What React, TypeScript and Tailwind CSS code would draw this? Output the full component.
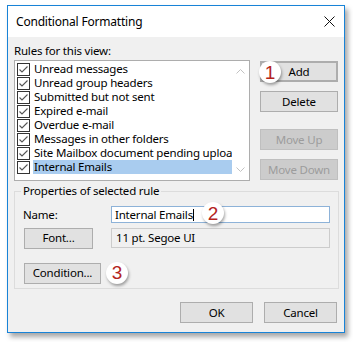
import React from "react";

const RULES = [
  "Unread messages",
  "Unread group headers",
  "Submitted but not sent",
  "Expired e-mail",
  "Overdue e-mail",
  "Messages in other folders",
  "Site Mailbox document pending upload",
  "Internal Emails",
];

function CheckBox() {
  return (
    <svg width="13" height="13" viewBox="0 0 13 13" className="shrink-0">
      <rect x="0.5" y="0.5" width="12" height="12" fill="#fff" stroke="#333" />
      <path d="M2.5 6.5 L5 9 L10.5 3.5" fill="none" stroke="#555" strokeWidth="1.1" />
    </svg>
  );
}

function Badge({ n, className }: { n: string; className: string }) {
  return (
    <span
      className={
        "absolute flex h-[22px] w-[22px] items-center justify-center rounded-full bg-white font-['Liberation_Sans',Arial,sans-serif] text-[19px] leading-none tracking-normal text-[#b4231d] shadow-[1px_2px_3px_rgba(0,0,0,0.35)] " +
        className
      }
    >
      {n}
    </span>
  );
}

function Btn({
  children,
  className = "",
  disabled = false,
}: {
  children: React.ReactNode;
  className?: string;
  disabled?: boolean;
}) {
  return (
    <button
      type="button"
      className={
        "relative flex h-[21px] items-center justify-center border " +
        (disabled
          ? "border-[#bfbfbf] bg-[#cccccc] text-[#9c9c9c] "
          : "border-[#adadad] bg-[#e1e1e1] text-black ") +
        className
      }
    >
      {children}
    </button>
  );
}

export default function App() {
  return (
    <div className="min-h-screen bg-white pl-[7px] pt-[5px] font-['Noto_Sans','Segoe_UI',sans-serif] text-[11.5px] tracking-[-0.2px] text-black">
      <div className="flex h-[328px] w-[338px] flex-col border border-[#1883d7] bg-[#f0f0f0] shadow-[3px_4px_5px_rgba(0,0,0,0.35)]">
        {/* title bar */}
        <div className="flex h-[31px] items-center justify-between bg-white pl-[8px] pr-[9px]">
          <span className="text-[12px] leading-[16px]">Conditional Formatting</span>
          <svg width="11" height="11" viewBox="0 0 11 11">
            <path d="M0.5 0.5 L10.5 10.5 M10.5 0.5 L0.5 10.5" stroke="#111" strokeWidth="1" />
          </svg>
        </div>

        <div className="px-[6px] pt-[6px]">
          <div className="leading-[16px]">Rules for this view:</div>

          <div className="mt-[1px] flex">
            {/* rules list */}
            <div className="flex h-[121px] w-[236px] border border-[#adadad] bg-white">
              <div className="min-w-0 flex-1 pl-[2px] pt-[1px]">
                {RULES.map((r, i) => (
                  <div key={r} className="flex h-[14px] items-center">
                    <CheckBox />
                    <span
                      className={
                        "ml-[3px] flex-1 overflow-hidden whitespace-nowrap pl-[1px] leading-[14px] " +
                        (i === RULES.length - 1 ? "bg-[#a9ccef]" : "")
                      }
                    >
                      {r}
                    </span>
                  </div>
                ))}
              </div>
              <div className="flex w-[17px] flex-col items-center justify-between py-[8px]">
                <svg width="9" height="5" viewBox="0 0 9 5">
                  <path d="M0.5 4.5 L4.5 0.5 L8.5 4.5" fill="none" stroke="#c2c2c2" />
                </svg>
                <svg width="9" height="5" viewBox="0 0 9 5">
                  <path d="M0.5 0.5 L4.5 4.5 L8.5 0.5" fill="none" stroke="#c2c2c2" />
                </svg>
              </div>
            </div>

            {/* right side buttons */}
            <div className="ml-[10px] mt-[1px] flex w-[78px] flex-col">
              <Btn className="border-2 border-[#0078d7]">
                Add
                <Badge n="1" className="left-[-3px] top-[-2px]" />
              </Btn>
              <Btn className="mt-[9px]">Delete</Btn>
              <Btn className="mt-[17px]" disabled>
                Move Up
              </Btn>
              <Btn className="mt-[9px]" disabled>
                Move Down
              </Btn>
            </div>
          </div>

          {/* properties group */}
          <fieldset className="mt-[2px] border border-[#dcdcdc] pb-[5px] pl-[6px] pr-[8px]">
            <legend className="px-[2px] leading-[16px]">Properties of selected rule</legend>

            <div className="mt-[7px] flex h-[17px] items-center">
              <span className="ml-[2px] w-[88px]">Name:</span>
              <div className="relative flex h-[17px] w-[219px] items-center border border-[#8db2d8] bg-white pl-[3px]">
                <span className="leading-[14px]">Internal Emails</span>
                <span className="h-[12px] w-px bg-black" />
                <Badge n="2" className="left-[90px] top-[-5px]" />
              </div>
            </div>

            <div className="mt-[5px] flex h-[20px] items-center">
              <Btn className="ml-[3px] h-[20px] w-[69px]">Font...</Btn>
              <div className="ml-[18px] flex h-[20px] w-[219px] items-center border border-[#cccccc] pl-[4px]">
                11 pt. Segoe UI
              </div>
            </div>

            <div className="mt-[15px] flex h-[20px] items-center">
              <Btn className="ml-[3px] h-[20px] w-[77px]">
                Condition...
                <Badge n="3" className="left-[81px] top-[-2px]" />
              </Btn>
            </div>
          </fieldset>

          {/* dialog buttons */}
          <div className="mt-[13px] flex justify-end gap-[11px] pr-px">
            <Btn className="h-[21px] w-[73px]">OK</Btn>
            <Btn className="h-[21px] w-[73px]">Cancel</Btn>
          </div>
        </div>
      </div>
    </div>
  );
}
